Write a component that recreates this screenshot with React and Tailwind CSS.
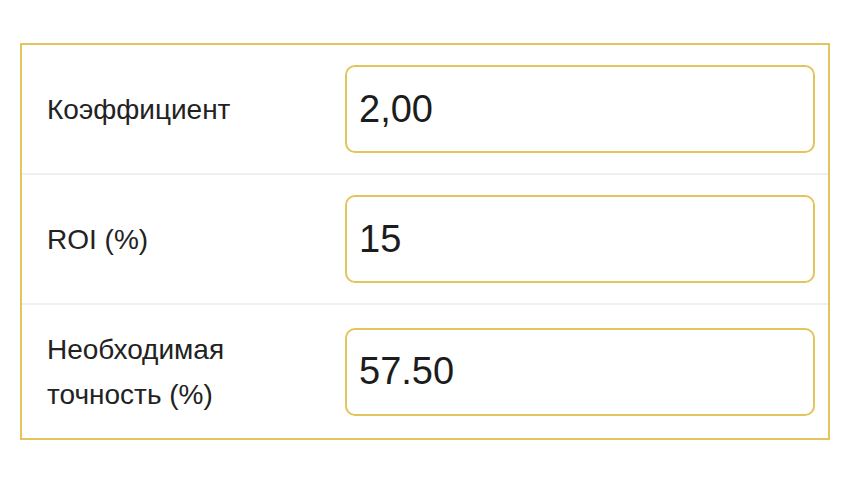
import React from "react";

const rows = [
    { label: ["Коэффициент"], value: "2,00" },
    { label: ["ROI (%)"], value: "15" },
    { label: ["Необходимая", "точность (%)"], value: "57.50" },
];

const App = () => {
    return (
        <div className="min-h-screen bg-white pt-[43px] pl-5" style={{ fontFamily: '"Liberation Sans", Arial, sans-serif' }}>
            <div className="w-[810px] border-2 border-[#e4c45c]">
                {rows.map((row, i) => (
                    <div
                        key={row.value}
                        className={`flex items-center pl-[25px] pr-[13px] ${i < rows.length - 1 ? "h-[130px] border-b-2 border-[#efefef]" : "h-[133px]"}`}
                    >
                        <div className="w-[298px] pr-4 text-[28px] leading-[45px] text-[#222]">
                            {row.label.map((line) => (
                                <div key={line}>{line}</div>
                            ))}
                        </div>
                        <div className="flex-1 h-[88px] rounded-[10px] border-2 border-[#e4c45c] flex items-center pl-[12px]">
                            <span className="text-[38px] text-[#1c1c1c]">{row.value}</span>
                        </div>
                    </div>
                ))}
            </div>
        </div>
    );
};

export default App;
